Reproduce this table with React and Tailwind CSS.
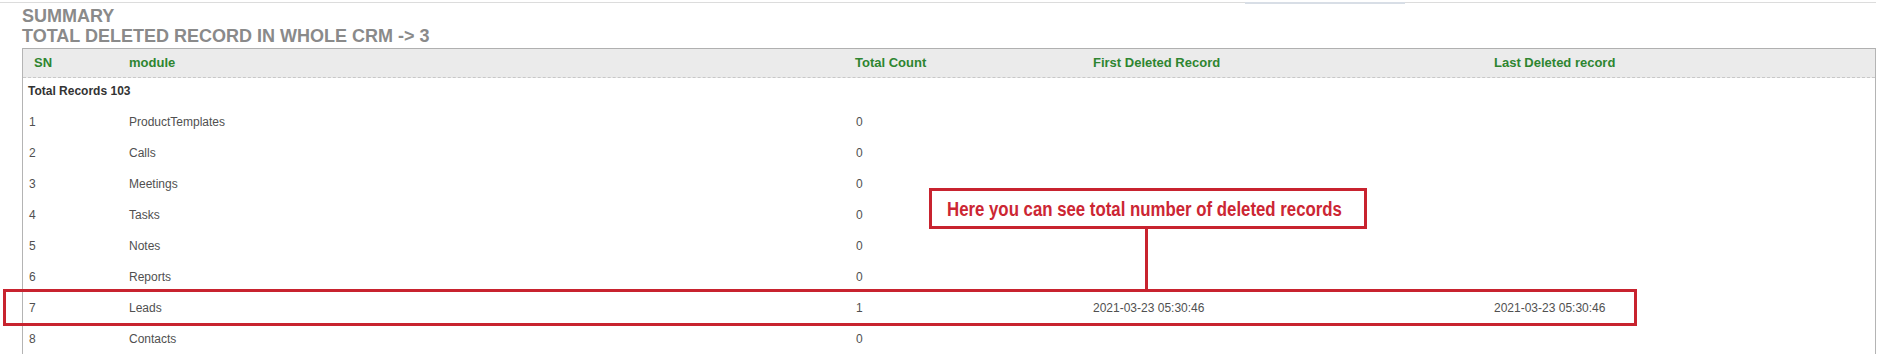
import React from 'react';

const rows = [
    { sn: 1, module: 'ProductTemplates', count: 0 },
    { sn: 2, module: 'Calls', count: 0 },
    { sn: 3, module: 'Meetings', count: 0 },
    { sn: 4, module: 'Tasks', count: 0 },
    { sn: 5, module: 'Notes', count: 0 },
    { sn: 6, module: 'Reports', count: 0 },
    { sn: 7, module: 'Leads', count: 1, first: '2021-03-23 05:30:46', last: '2021-03-23 05:30:46' },
    { sn: 8, module: 'Contacts', count: 0 },
];

const cols = 'grid grid-cols-[100px_727px_237px_401px_1fr]';

export default function App() {
    return (
        <div className="relative w-[1881px] h-[358px] overflow-hidden bg-white font-['Liberation_Sans',Arial,sans-serif]">
            {/* top rule */}
            <div className="pt-[2px] flex w-[1876px]">
                <div className="h-px w-[1245px] bg-[#dcdcdc]" />
                <div className="h-[2px] w-[160px] bg-[#d8dee6]" />
                <div className="h-px flex-1 bg-[#dcdcdc]" />
            </div>

            {/* Summary heading */}
            <div className="mt-[2px] pl-[22px] text-[18px] leading-[20px] font-bold text-[#8a8a8a]">
                <div>SUMMARY</div>
                <div>TOTAL DELETED RECORD IN WHOLE CRM -&gt; 3</div>
            </div>

            {/* Table */}
            <div className="mt-[2px] ml-[22px] w-[1854px] border-l border-r border-[#b4b4b4]">
                <div className="h-px bg-[#b0b0b0]" />
                <div className={`${cols} h-[29px] items-center bg-[#ebebeb] border-b border-dashed border-[#c8c8c8] text-[13px] font-bold text-[#2e8530]`}>
                    <div className="pl-[11px]">SN</div>
                    <div className="pl-[6px]">module</div>
                    <div className="pl-[5px]">Total Count</div>
                    <div className="pl-[6px]">First Deleted Record</div>
                    <div className="pl-[6px]">Last Deleted record</div>
                </div>

                <div className="h-[28px] flex items-center pb-[2px] pl-[5px] text-[12px] font-bold text-[#333]">
                    Total Records 103
                </div>

                {rows.map(r => (
                    <div key={r.sn} className={`${cols} h-[31px] items-center text-[12px] text-[#505050]`}>
                        <div className="pl-[6px]">{r.sn}</div>
                        <div className="pl-[6px]">{r.module}</div>
                        <div className="pl-[6px]">{r.count}</div>
                        <div className="pl-[6px]">{r.first}</div>
                        <div className="pl-[6px]">{r.last}</div>
                    </div>
                ))}
            </div>

            {/* annotation: highlighted row */}
            <div className="absolute left-[3px] top-[289px] w-[1634px] h-[37px] border-[3px] border-[#c8232f]" />

            {/* annotation: connector */}
            <div className="absolute left-[1145px] top-[226px] w-[3px] h-[64px] bg-[#c8232f]" />

            {/* annotation: callout */}
            <div className="absolute left-[929px] top-[188px] w-[438px] h-[41px] border-[3px] border-[#c8232f] bg-white flex items-center pl-[15px]">
                <span className="inline-block origin-left scale-x-[0.84] text-[20px] font-bold text-[#cc2633] whitespace-nowrap">
                    Here you can see total number of deleted records
                </span>
            </div>
        </div>
    );
}
